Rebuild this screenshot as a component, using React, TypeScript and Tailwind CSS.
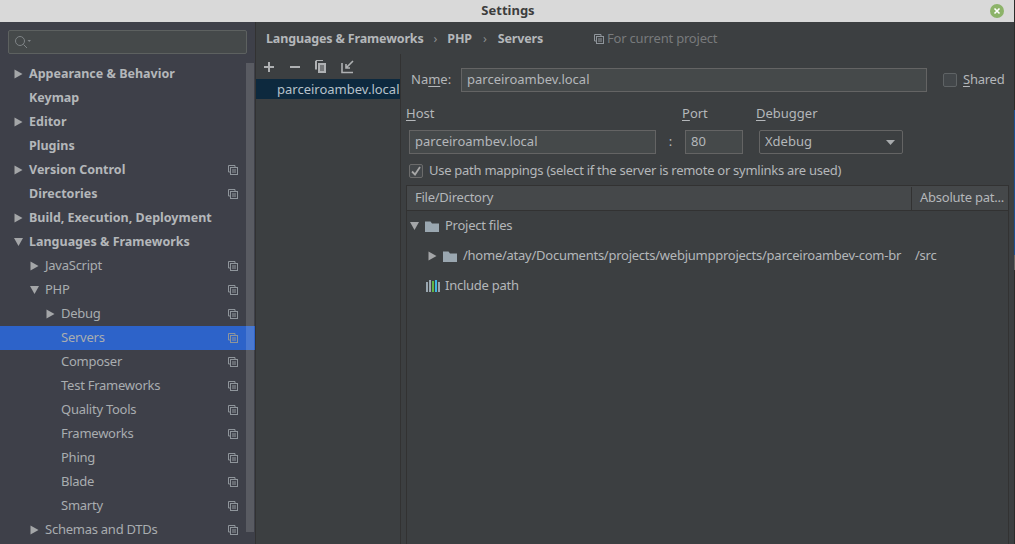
import type { ReactNode } from 'react'

const treeItems = [
  { label: 'Appearance & Behavior', level: 0, arrow: 'right', bold: true },
  { label: 'Keymap', level: 0, bold: true },
  { label: 'Editor', level: 0, arrow: 'right', bold: true },
  { label: 'Plugins', level: 0, bold: true },
  { label: 'Version Control', level: 0, arrow: 'right', bold: true, copy: true },
  { label: 'Directories', level: 0, bold: true, copy: true },
  { label: 'Build, Execution, Deployment', level: 0, arrow: 'right', bold: true },
  { label: 'Languages & Frameworks', level: 0, arrow: 'down', bold: true },
  { label: 'JavaScript', level: 1, arrow: 'right', copy: true },
  { label: 'PHP', level: 1, arrow: 'down', copy: true },
  { label: 'Debug', level: 2, arrow: 'right', copy: true },
  { label: 'Servers', level: 2, copy: true, selected: true },
  { label: 'Composer', level: 2, copy: true },
  { label: 'Test Frameworks', level: 2, copy: true },
  { label: 'Quality Tools', level: 2, copy: true },
  { label: 'Frameworks', level: 2, copy: true },
  { label: 'Phing', level: 2, copy: true },
  { label: 'Blade', level: 2, copy: true },
  { label: 'Smarty', level: 2, copy: true },
  { label: 'Schemas and DTDs', level: 1, arrow: 'right', copy: true },
]

const levelPadding = ['pl-[14px]', 'pl-[30px]', 'pl-[46px]']

function Arrow({ dir }: { dir?: string }) {
  if (!dir) return <span className="w-[15px] shrink-0" />
  return (
    <svg width="15" height="12" viewBox="0 0 15 12" className="shrink-0">
      {dir === 'right' ? (
        <path d="M0.5 1.5 L8.5 6 L0.5 10.5 Z" fill="#a4a6a8" />
      ) : (
        <path d="M0 2 L9 2 L4.5 10 Z" fill="#a4a6a8" />
      )}
    </svg>
  )
}

function CopyIcon() {
  return (
    <svg width="10" height="10" viewBox="0 0 10 10" fill="none" stroke="#8f959b" strokeWidth="1" className="shrink-0">
      <path d="M7 2.5V0.5H0.5V7H2.5" />
      <rect x="2.5" y="2.5" width="7" height="7" />
      <path d="M4 5H8M4 7H8" />
    </svg>
  )
}

function FolderIcon() {
  return (
    <svg width="14" height="11" viewBox="0 0 14 11" className="shrink-0">
      <path d="M0 0.5H5.5L7 2.5H14V11H0Z" fill="#9aa7b0" />
    </svg>
  )
}

function Underlined({ children }: { children: ReactNode }) {
  return <span className="underline underline-offset-2">{children}</span>
}

function Sidebar() {
  return (
    <aside className="relative flex h-full w-[255px] shrink-0 flex-col bg-[#3e4049]">
      <div className="px-2 pt-2">
        <div className="flex h-[24px] w-[239px] items-center rounded-[2px] border border-[#5d6160] bg-[#45494a] pl-[5px]">
          <svg width="18" height="14" viewBox="0 0 18 14" fill="none" stroke="#7f8487" strokeWidth="1">
            <circle cx="6" cy="6" r="4.5" />
            <path d="M9.5 9.5L13 13" />
            <path d="M13.5 5H17L15.25 7Z" fill="#7f8487" stroke="none" />
          </svg>
        </div>
      </div>
      <div className="mt-[8px] min-h-0 flex-1">
        {treeItems.map((item) => (
          <div
            key={item.label}
            className={`flex h-6 items-center pr-[17px] ${levelPadding[item.level]} ${item.selected ? 'bg-[#2d63c9]' : ''}`}
          >
            <Arrow dir={item.arrow} />
            <span
              className={`flex-1 whitespace-nowrap ${
                item.bold
                  ? 'text-[12.5px] font-bold text-[#b4b7ba]'
                  : 'text-[13px] tracking-[-0.25px] text-[#a9adb0]'
              }`}
            >
              {item.label}
            </span>
            {item.copy && <CopyIcon />}
          </div>
        ))}
      </div>
      {/* scrollbar thumb lies over the rows */}
      <div className="absolute left-[246px] top-[41px] h-[469px] w-2 bg-[#ffffff]/[0.14]" />
    </aside>
  )
}

function ServerList() {
  return (
    <div className="h-full w-[145px] shrink-0 border-r border-[#323232]">
      <div className="flex h-[25px] items-center pl-2">
        <svg width="100" height="14" viewBox="0 0 100 14" fill="none" stroke="#afb1b3" strokeWidth="2">
          <path d="M0 7H10M5 2V12" />
          <path d="M26 7H36" />
          <path d="M52 2V0.5H59" strokeWidth="1" />
          <path d="M52 1V9.5" />
          <rect x="54.5" y="3.5" width="7" height="9" fill="#afb1b3" stroke="#afb1b3" strokeWidth="1" />
          <path d="M56 6H60M56 8H60M56 10H60" stroke="#3c3f41" strokeWidth="1" />
          <path d="M78 3V12.5H89" strokeWidth="1.6" />
          <path d="M89 1L82 8M82 4V8H86" strokeWidth="1.6" />
        </svg>
      </div>
      <div className="flex h-5 items-center whitespace-nowrap bg-[#0d293e] pl-[21px] pt-[2px] text-[13px] text-[#b7c2cb]">
        parceiroambev.local
      </div>
    </div>
  )
}

function ServerForm() {
  return (
    <div className="min-w-0 flex-1 pt-[14px] text-[13px] text-[#b4b7ba]">
      <div className="flex h-[24px] items-center pl-[10px]">
        <span className="w-[50px]">
          Na<Underlined>m</Underlined>e:
        </span>
        <div className="flex h-[24px] w-[466px] items-center border border-[#646464] bg-[#45494a] pl-[5px]">parceiroambev.local</div>
        <span className="ml-4 h-[14px] w-[14px] rounded-[2px] border border-[#5f6365] bg-[#43474a]" />
        <span className="ml-[6px] tracking-[-0.25px]">
          <Underlined>S</Underlined>hared
        </span>
      </div>
      <div className="mt-[13px] flex h-[17px] items-center pl-[5px]">
        <span className="w-[276px]">
          <Underlined>H</Underlined>ost
        </span>
        <span className="w-[74px]">
          <Underlined>P</Underlined>ort
        </span>
        <span>
          <Underlined>D</Underlined>ebugger
        </span>
      </div>
      <div className="mt-2 flex h-[24px] items-center pl-2">
        <div className="flex h-[24px] w-[247px] items-center border border-[#646464] bg-[#45494a] pl-[5px]">parceiroambev.local</div>
        <span className="w-[29px] text-center">:</span>
        <div className="flex h-[24px] w-[58px] items-center border border-[#646464] bg-[#45494a] pl-[5px]">80</div>
        <div className="ml-4 flex h-[24px] w-[144px] items-center justify-between rounded-[2px] border border-[#646464] bg-[#3c3f41] pl-[5px] pr-[7px]">
          Xdebug
          <svg width="9" height="5" viewBox="0 0 9 5">
            <path d="M0 0H9L4.5 5Z" fill="#a8abad" />
          </svg>
        </div>
      </div>
      <div className="mt-[10px] flex h-[14px] items-center pl-2">
        <span className="flex h-[14px] w-[14px] items-center justify-center rounded-[2px] border border-[#6b6b6b] bg-[#43474a]">
          <svg width="10" height="10" viewBox="0 0 10 10" fill="none" stroke="#a7a7a7" strokeWidth="1.8">
            <path d="M1 5.5L4 8.5L9 1" />
          </svg>
        </span>
        <span className="ml-[6px] whitespace-nowrap tracking-[-0.27px]">Use path mappings (select if the server is remote or symlinks are used)</span>
      </div>
      <div className="ml-[5px] mt-[7px] h-[360px] w-[603px] border-x border-t border-[#323232]">
        <div className="flex h-[25px] items-center border-b border-[#323232] bg-[#45484a]">
          <span className="w-[504px] pl-2 tracking-[-0.25px]">File/Directory</span>
          <span className="flex h-[23px] flex-1 items-center overflow-hidden whitespace-nowrap border-l border-[#323232] pl-2 tracking-[-0.25px]">Absolute pat...</span>
        </div>
        <div className="flex h-[30px] items-center pl-[3px]">
          <Arrow dir="down" />
          <FolderIcon />
          <span className="ml-[6px] tracking-[-0.25px]">Project files</span>
        </div>
        <div className="flex h-[30px] items-center pl-[21px]">
          <Arrow dir="right" />
          <FolderIcon />
          <span className="ml-[6px] w-[452px] whitespace-nowrap tracking-[-0.25px]">/home/atay/Documents/projects/webjumpprojects/parceiroambev-com-br</span>
          <span className="tracking-[-0.25px]">/src</span>
        </div>
        <div className="flex h-[30px] items-center pl-[19px]">
          <svg width="15" height="12" viewBox="0 0 15 12" className="shrink-0">
            <rect x="0" y="2" width="2" height="10" fill="#9aa7b0" />
            <rect x="3" y="0" width="2" height="12" fill="#9aa7b0" />
            <rect x="6" y="1" width="2" height="11" fill="#62b543" />
            <rect x="9" y="0" width="2" height="12" fill="#40b6e0" />
            <rect x="12" y="2" width="2" height="10" fill="#9aa7b0" />
          </svg>
          <span className="ml-1 tracking-[-0.25px]">Include path</span>
        </div>
      </div>
    </div>
  )
}

export default function App() {
  return (
    <div className="flex h-[544px] w-[1015px] overflow-hidden bg-[#3c3f41] font-['Noto_Sans',sans-serif]">
      <div className="flex min-w-0 flex-1 flex-col">
        <header className="flex h-[22px] shrink-0 items-center bg-[#d9d9d9] pr-[10px]">
          <span className="flex-1 pl-[26px] text-center text-[13px] font-bold text-[#3d3d3d]">Settings</span>
          <span className="flex h-[14px] w-[14px] items-center justify-center rounded-full bg-[#8cb369]">
            <svg width="8" height="8" viewBox="0 0 8 8" stroke="#fff" strokeWidth="1.6">
              <path d="M1.5 1.5L6.5 6.5M6.5 1.5L1.5 6.5" />
            </svg>
          </span>
        </header>
        <div className="flex min-h-0 flex-1">
          <Sidebar />
          <main className="flex min-w-0 flex-1 flex-col border-l border-[#323232]">
            <div className="flex h-[32px] shrink-0 items-center pl-[10px] pt-[2px] text-[12.5px] font-bold tracking-[-0.15px] text-[#b4b7ba]">
              <span>Languages &amp; Frameworks</span>
              <span className="mx-[10px] font-normal text-[#8a8d8f]">›</span>
              <span>PHP</span>
              <span className="mx-[11px] font-normal text-[#8a8d8f]">›</span>
              <span>Servers</span>
              <span className="ml-[51px] flex items-center gap-[3px] text-[13px] font-normal tracking-[-0.2px] text-[#787a7c]">
                <CopyIcon />
                For current project
              </span>
            </div>
            <div className="flex min-h-0 flex-1">
              <ServerList />
              <ServerForm />
            </div>
          </main>
        </div>
      </div>
      {/* sliver of the window behind, at the right edge */}
      <div className="flex h-full w-px shrink-0 flex-col bg-[#2b2b2b]">
        <div className="mt-[110px] h-[145px] bg-[#1c4f8e]" />
        <div className="h-[15px] bg-[#666666]" />
      </div>
    </div>
  )
}
